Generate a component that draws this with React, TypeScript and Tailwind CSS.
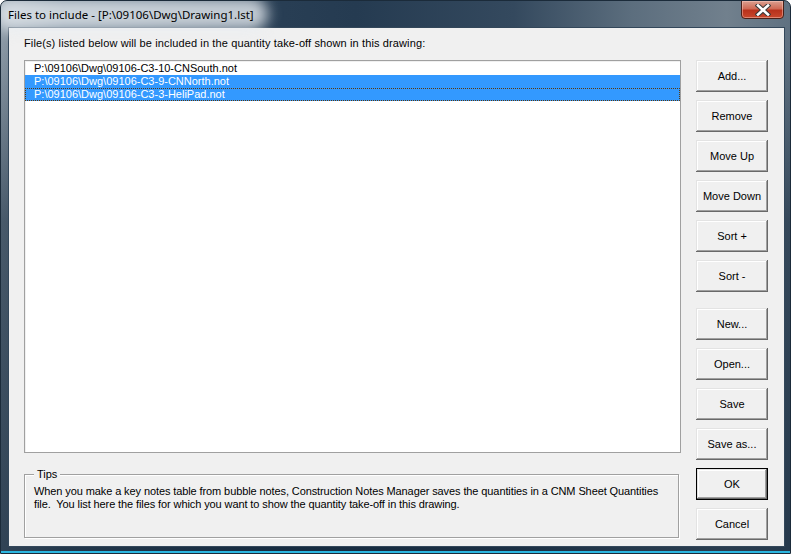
import React from "react";

const btnBase =
  "w-[72px] h-[32px] bg-[#f0f0f0] text-[11px] leading-[13px] text-black flex items-center justify-center shadow-[inset_-1px_-1px_0_#696969,inset_1px_1px_0_#e3e3e3,inset_-2px_-2px_0_#a0a0a0,inset_2px_2px_0_#ffffff]";

function Btn({ label, def }: { label: string; def?: boolean }) {
  if (def) {
    return (
      <div className="w-[72px] h-[32px] border border-black">
        <div className="w-[70px] h-[30px] bg-[#f0f0f0] text-[11px] leading-[13px] text-black flex items-center justify-center shadow-[inset_-1px_-1px_0_#696969,inset_1px_1px_0_#e3e3e3,inset_-2px_-2px_0_#a0a0a0,inset_2px_2px_0_#ffffff]">
          {label}
        </div>
      </div>
    );
  }
  return <div className={btnBase}>{label}</div>;
}

const rows = [
  "P:\\09106\\Dwg\\09106-C3-10-CNSouth.not",
  "P:\\09106\\Dwg\\09106-C3-9-CNNorth.not",
  "P:\\09106\\Dwg\\09106-C3-3-HeliPad.not",
];

export default function App() {
  return (
    <div
      className="w-[791px] h-[554px] relative overflow-hidden rounded-t-[7px] border border-[#1b2b3a] flex flex-col bg-[linear-gradient(to_bottom,rgba(0,0,0,0)_0%,rgba(0,0,0,0)_8%,rgba(18,38,58,0.55)_40%,rgba(18,38,58,0.75)_100%),linear-gradient(to_right,#8b99a5_0%,#55697b_8%,#2a4056_30%,#253b51_45%,#34495e_65%,#5c6e7e_80%,#71808d_92%,#5f7181_100%)]"
      style={{ fontFamily: '"Liberation Sans", Arial, sans-serif' }}
    >
      {/* title bar */}
      <div className="h-[26px] shrink-0 flex items-center pl-[7px] relative">
        <div className="relative">
          <div className="absolute -inset-x-[14px] -inset-y-[5px] bg-[#e8eef2]/80 rounded-full blur-[7px]" />
          <span
            className="relative text-[11.5px] leading-[16px] text-black whitespace-pre"
            style={{ fontFamily: '"Noto Sans", "Open Sans", sans-serif' }}
          >
            Files to include - [P:\09106\Dwg\Drawing1.lst]
          </span>
        </div>
        {/* close button */}
        <div className="absolute top-[-1px] right-[6px] w-[43px] h-[19px] rounded-b-[4px] border border-[#4a2018] overflow-hidden bg-[linear-gradient(to_bottom,#dba090_0%,#cf6a55_45%,#b8321c_55%,#c8472c_100%)] shadow-[inset_0_0_0_1px_rgba(255,210,200,0.45)] flex items-center justify-center">
          <svg width="16" height="12" viewBox="0 0 16 12">
            <path d="M3 1.5 L13 10.5 M13 1.5 L3 10.5" stroke="#3a3a3a" strokeWidth="4.6" strokeLinecap="square" />
            <path d="M3 1.5 L13 10.5 M13 1.5 L3 10.5" stroke="#ffffff" strokeWidth="2.6" strokeLinecap="square" />
          </svg>
        </div>
      </div>

      {/* client */}
      <div className="ml-[7px] mr-[5px] h-[520px] shrink-0 bg-[#f0f0f0] border border-[#33475a] flex">
        {/* left column */}
        <div className="pl-[15px] flex flex-col">
          <div className="pt-[9px] text-[11px] leading-[13px] text-black whitespace-pre tracking-[0.12px]">
            File(s) listed below will be included in the quantity take-off shown in this drawing:
          </div>
          <div className="mt-[10px] w-[657px] h-[393px] bg-white border border-[#a0a0a0] shadow-[inset_1px_1px_0_#f0f0f0] pt-[1px]">
            {rows.map((r, i) => (
              <div
                key={i}
                className={
                  "h-[13px] text-[11px] leading-[13px] pl-[9px] whitespace-pre " +
                  (i === 0
                    ? "text-black"
                    : i === 1
                    ? "bg-[#3399ff] text-white"
                    : "bg-[#3399ff] text-white outline outline-1 outline-dotted outline-[#5a3a10] -outline-offset-1")
                }
              >
                {r}
              </div>
            ))}
          </div>
          <div className="mt-[21px] w-[655px] h-[64px] relative border border-[#a0a0a0] shadow-[inset_1px_1px_0_#ffffff,1px_1px_0_#ffffff]">
            <span className="absolute top-[-7px] left-[9px] px-[3px] bg-[#f0f0f0] text-[11px] leading-[13px] text-black">
              Tips
            </span>
            <div className="pt-[10px] pl-[9px] text-[11px] leading-[13px] text-black whitespace-pre tracking-[-0.1px]">
              {"When you make a key notes table from bubble notes, Construction Notes Manager saves the quantities in a CNM Sheet Quantities\nfile.  You list here the files for which you want to show the quantity take-off in this drawing."}
            </div>
          </div>
        </div>
        {/* right column */}
        <div className="ml-[15px] pt-[32px] flex flex-col gap-[8px]">
          <Btn label="Add..." />
          <Btn label="Remove" />
          <Btn label="Move Up" />
          <Btn label="Move Down" />
          <Btn label="Sort +" />
          <Btn label="Sort -" />
          <div className="h-[8px]" />
          <div className="-mt-[8px] flex flex-col gap-[8px]">
            <Btn label="New..." />
            <Btn label="Open..." />
            <Btn label="Save" />
            <Btn label="Save as..." />
            <Btn label="OK" def />
            <Btn label="Cancel" />
          </div>
        </div>
      </div>
      <div className="flex-1 border-b-[2px] border-[#2bb6e0]" />
    </div>
  );
}
